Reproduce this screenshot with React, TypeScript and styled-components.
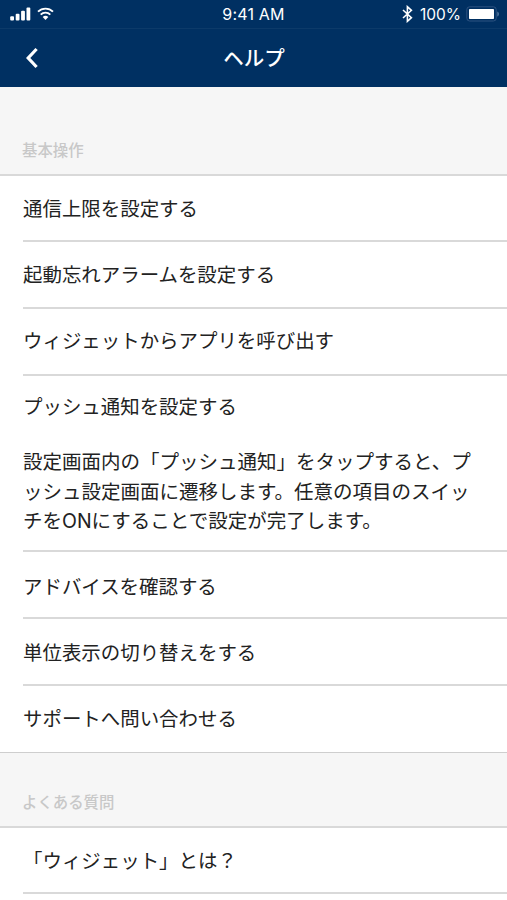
// Libs
import styled, { createGlobalStyle } from "styled-components";

type Topic = { title: string; height: number; top: number; answer?: string[] };

const BASICS: Topic[] = [
  { title: "通信上限を設定する", height: 66, top: 18 },
  { title: "起動忘れアラームを設定する", height: 67, top: 18 },
  { title: "ウィジェットからアプリを呼び出す", height: 67, top: 17 },
  {
    title: "プッシュ通知を設定する",
    height: 176,
    top: 16,
    answer: [
      "設定画面内の「プッシュ通知」をタップすると、プ",
      "ッシュ設定画面に遷移します。任意の項目のスイッ",
      "チをONにすることで設定が完了します。",
    ],
  },
  { title: "アドバイスを確認する", height: 67, top: 20 },
  { title: "単位表示の切り替えをする", height: 67, top: 19 },
  { title: "サポートへ問い合わせる", height: 66, top: 18 },
];

const FAQ: Topic[] = [
  { title: "「ウィジェット」とは？", height: 66, top: 18 },
];

function SignalIcon() {
  return (
    <svg width="21" height="14" viewBox="0 0 21 14" fill="currentColor">
      <rect x="0.2" y="9.2" width="3.8" height="4.3" rx="1" />
      <rect x="5.7" y="6.7" width="3.8" height="6.8" rx="1" />
      <rect x="11.1" y="3.8" width="3.8" height="9.7" rx="1" />
      <rect x="16.5" y="0.5" width="3.8" height="13" rx="1" />
    </svg>
  );
}

function WifiIcon() {
  return (
    <svg width="17" height="14" viewBox="0 0 17 14" fill="none" stroke="currentColor" strokeWidth="1.9">
      <path d="M1 4.7a10.6 10.6 0 0 1 15 0" />
      <path d="M3.7 7.6a6.8 6.8 0 0 1 9.6 0" />
      <path d="M5.7 10a3.9 3.9 0 0 1 5.6 0L8.5 12.9z" fill="currentColor" stroke="none" />
    </svg>
  );
}

function BluetoothIcon() {
  return (
    <svg width="11" height="18" viewBox="0 0 11 18" fill="none" stroke="currentColor" strokeWidth="1.6">
      <path d="M1 5l8.4 7.7-4 3.6V1.7l4 3.6L1 13" />
    </svg>
  );
}

function BatteryIcon() {
  return (
    <svg width="34" height="16" viewBox="0 0 34 16" fill="none">
      <rect x="0.8" y="0.8" width="29.4" height="14.2" rx="2.8" stroke="#2c5280" strokeWidth="1" />
      <rect x="3" y="3" width="25" height="10" rx="0.8" fill="#fff" />
      <path d="M31.4 5.4c1.9.8 1.9 4.3 0 5.1z" fill="#5f82a8" />
    </svg>
  );
}

function TopicRow({ topic }: { topic: Topic }) {
  return (
    <Row $height={topic.height} $top={topic.top}>
      <Title>{topic.title}</Title>
      {topic.answer && (
        <Answer>
          {topic.answer.map((line) => (
            <Line key={line}>{line}</Line>
          ))}
        </Answer>
      )}
    </Row>
  );
}

export default function App() {
  return (
    <Screen>
      <GlobalStyle />
      <StatusBar>
        <StatusLeft>
          <SignalIcon />
          <WifiIcon />
        </StatusLeft>
        <Clock>9:41 AM</Clock>
        <StatusRight>
          <BluetoothIcon />
          <Percent>100%</Percent>
          <BatteryIcon />
        </StatusRight>
      </StatusBar>
      <NavBar>
        <BackButton aria-label="戻る">
          <svg width="15" height="22" viewBox="0 0 15 22" fill="none" stroke="currentColor" strokeWidth="3.2">
            <path d="M12.6 2L4.2 11l8.4 9" />
          </svg>
        </BackButton>
        <Heading>ヘルプ</Heading>
      </NavBar>
      <SectionLabel $height={87}>基本操作</SectionLabel>
      <List>
        {BASICS.map((topic) => (
          <TopicRow key={topic.title} topic={topic} />
        ))}
      </List>
      <SectionLabel $height={74} $ruled>
        よくある質問
      </SectionLabel>
      <List>
        {FAQ.map((topic) => (
          <TopicRow key={topic.title} topic={topic} />
        ))}
      </List>
    </Screen>
  );
}

const GlobalStyle = createGlobalStyle`
  * {
    box-sizing: border-box;
  }

  body {
    margin: 0;
    background: #fff;
    color: #222;
    font-family: Inter, "Noto Sans CJK JP", sans-serif;
  }

  svg {
    display: block;
  }
`;

const Screen = styled.main`
  width: 507px;
  height: 900px;
  overflow: hidden;
`;

const StatusBar = styled.div`
  display: grid;
  grid-template-columns: 1fr auto 1fr;
  align-items: center;
  height: 29px;
  padding: 0 7px 0 10px;
  border-bottom: 1px solid #0c3a69;

  background: #003062;
  color: #fff;
  font-size: 16px;
`;

const StatusLeft = styled.div`
  display: flex;
  gap: 6px;
`;

const Clock = styled.span`
  margin-left: -3px;
  letter-spacing: 0.2px;
`;

const StatusRight = styled.div`
  display: flex;
  align-items: center;
  justify-content: flex-end;
  gap: 7px;
`;

const Percent = styled.span`
  margin-right: -2px;
  font-size: 15.5px;
`;

const NavBar = styled.header`
  display: grid;
  grid-template-columns: 56px 1fr 56px;
  align-items: center;
  height: 58px;

  background: #003062;
  color: #fff;
`;

const BackButton = styled.button`
  padding: 0 0 0 24px;
  border: none;
  background: none;
  color: inherit;
`;

const Heading = styled.h1`
  margin: 0;
  padding: 0 0 3px 1px;
  font-size: 20.5px;
  font-weight: 500;
  text-align: center;
`;

const SectionLabel = styled.h2<{ $height: number; $ruled?: boolean }>`
  display: flex;
  align-items: flex-end;
  height: ${(p) => p.$height}px;
  margin: 0;
  padding: 0 22px 14px;
  border-top: ${(p) => (p.$ruled ? "1px solid #cecece" : "none")};

  background: #f6f6f6;
  color: #c8c8c8;
  font-size: 15.4px;
  font-weight: 500;
`;

const List = styled.ul`
  margin: 0;
  padding: 0 0 0 23px;
  border-top: 2px solid #d9d9d9;
  list-style: none;
`;

const Row = styled.li<{ $height: number; $top: number }>`
  height: ${(p) => p.$height}px;
  padding-top: ${(p) => p.$top}px;
  border-bottom: 2px solid #d9d9d9;

  ${List} > &:last-child:not(:first-child) {
    border-bottom: none;
  }
`;

const Title = styled.div`
  font-size: 19.45px;
  line-height: 30px;
`;

const Answer = styled.div`
  padding-top: 26px;
`;

const Line = styled.div`
  font-size: 19.5px;
  line-height: 29.5px;
  white-space: nowrap;
`;
